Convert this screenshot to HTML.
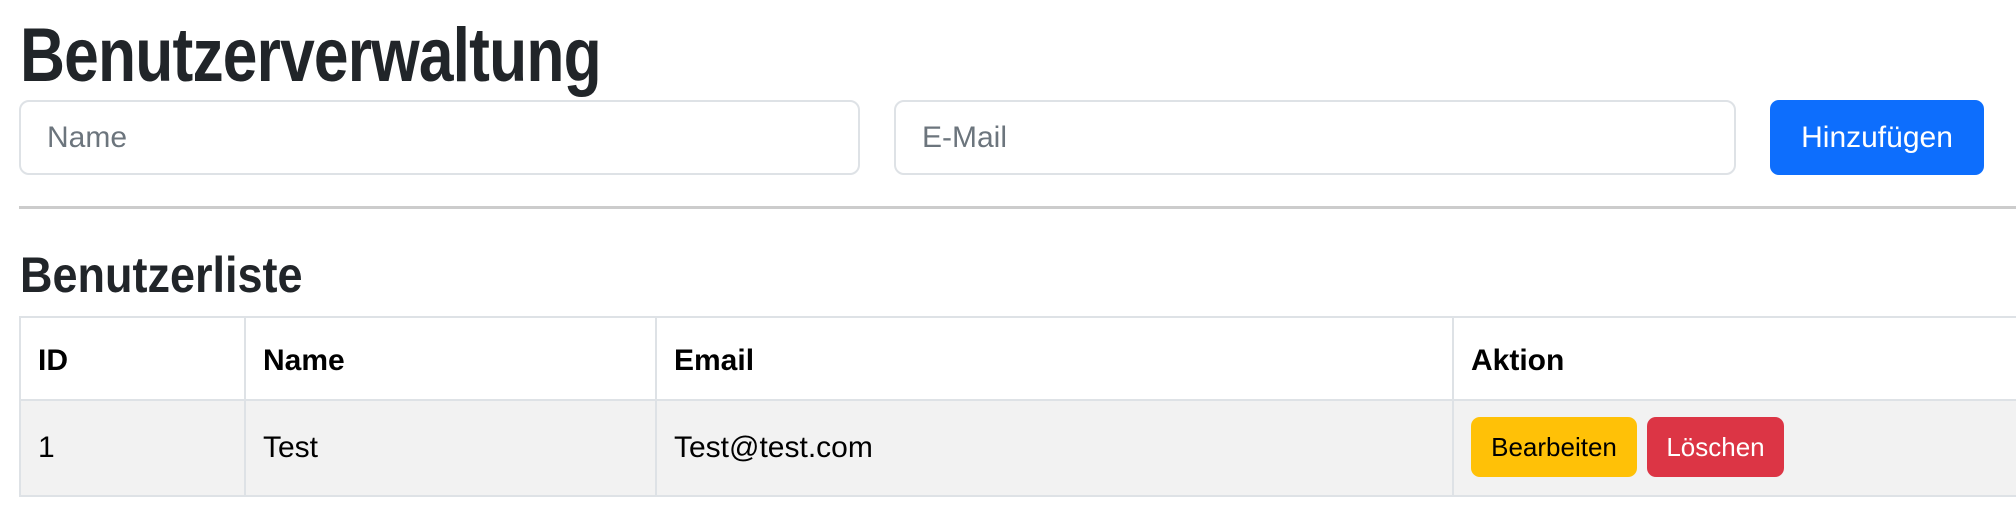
<!DOCTYPE html>
<html><head><meta charset="utf-8"><style>
*{box-sizing:border-box;margin:0;padding:0}
body{width:2016px;height:528px;background:#fff;font-family:"Liberation Sans",Arial,sans-serif;color:#212529;position:relative;overflow:hidden}
h1{position:absolute;left:20px;top:12px;font-size:76px;font-weight:bold;letter-spacing:-1px;transform:scaleX(0.82);transform-origin:left;white-space:nowrap}
.inp{position:absolute;top:100px;height:75px;border:2px solid #dee2e6;border-radius:10px;background:#fff;font-size:30px;color:#6c757d;padding-left:26px;line-height:71px}
.btn{position:absolute;border-radius:9px;text-align:center}
hr{position:absolute;left:19px;right:0;top:206px;border:0;border-top:3px solid #ccc}
h2{position:absolute;left:20px;top:246px;font-size:50px;font-weight:bold;transform:scaleX(0.9);transform-origin:left;white-space:nowrap}
table{position:absolute;left:19px;top:316px;width:2010px;border-collapse:collapse;font-size:30px}
td,th{border:2px solid #dee2e6;text-align:left;padding-left:17px;color:#000}
th{height:83px;font-weight:bold;padding-top:4px}
tr.r td{background:#f2f2f2;height:96px}
</style></head><body>
<h1>Benutzerverwaltung</h1>
<div class="inp" style="left:19px;width:841px">Name</div>
<div class="inp" style="left:894px;width:842px">E-Mail</div>
<div class="btn" style="left:1770px;top:100px;width:214px;height:75px;background:#0d6efd;color:#fff;font-size:30px;line-height:75px">Hinzufügen</div>
<hr>
<h2>Benutzerliste</h2>
<table>
<tr><th style="width:225px">ID</th><th style="width:411px">Name</th><th style="width:797px">Email</th><th>Aktion</th></tr>
<tr class="r"><td>1</td><td>Test</td><td>Test@test.com</td><td></td></tr>
</table>
<div class="btn" style="left:1471px;top:417px;width:166px;height:60px;background:#ffc107;color:#000;font-size:26px;line-height:60px">Bearbeiten</div>
<div class="btn" style="left:1647px;top:417px;width:137px;height:60px;background:#dc3545;color:#fff;font-size:26px;line-height:60px">Löschen</div>
</body></html>
